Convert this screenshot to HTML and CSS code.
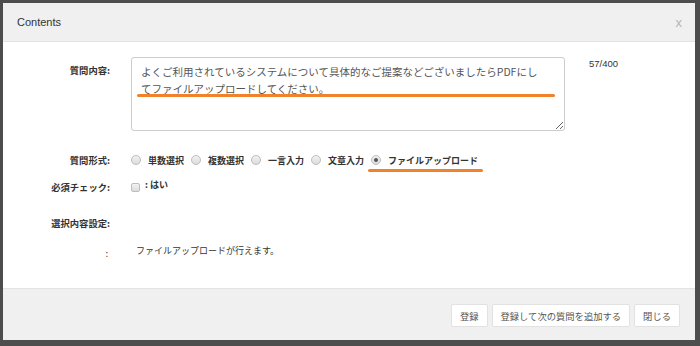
FILE: index.html
```html
<!DOCTYPE html>
<html lang="ja">
<head>
    <meta charset="UTF-8">
    <title>Contents</title>
    <link rel="stylesheet" href="styles.css">
</head>
<body>
    <div class="modal">
        <div class="modal-header">
            <h4 class="modal-title">Contents</h4>
            <button class="close">x</button>
        </div>
        <div class="modal-body">
            <div class="form-row row-question">
                <label class="form-label">質問内容:</label>
                <div class="field">
                    <textarea class="question-text">よくご利用されているシステムについて具体的なご提案などございましたらPDFにし
てファイルアップロードしてください。</textarea>
                    <span class="mark mark-text"></span>
                </div>
                <span class="counter">57/400</span>
            </div>
            <div class="form-row row-type">
                <label class="form-label">質問形式:</label>
                <div class="options">
                    <label class="option"><input type="radio" name="qtype">単数選択</label>
                    <label class="option"><input type="radio" name="qtype">複数選択</label>
                    <label class="option"><input type="radio" name="qtype">一言入力</label>
                    <label class="option"><input type="radio" name="qtype">文章入力</label>
                    <label class="option"><input type="radio" name="qtype" checked>ファイルアップロード<span class="mark mark-option"></span></label>
                </div>
            </div>
            <div class="form-row row-required">
                <label class="form-label">必須チェック:</label>
                <label class="check"><input type="checkbox"><span>: はい</span></label>
            </div>
            <div class="form-row row-setting">
                <label class="form-label">選択内容設定:</label>
            </div>
            <div class="form-row row-note">
                <label class="form-label">:</label>
                <p class="note">ファイルアップロードが行えます。</p>
            </div>
        </div>
        <div class="modal-footer">
            <button class="btn">登録</button>
            <button class="btn">登録して次の質問を追加する</button>
            <button class="btn">閉じる</button>
        </div>
    </div>
</body>
</html>
```

FILE: styles.css
```css
body {
    margin: 0;
    padding: 3px 5px 6px 3px;
    background-color: #4d4d4d;
    font-family: "Noto Sans CJK JP", "Liberation Sans", sans-serif;
    color: #333;
}
.modal {
    width: 692px;
    height: 337px;
    background-color: #fff;
    display: flex;
    flex-direction: column;
    box-sizing: border-box;
}
.modal-header {
    height: 39px;
    background-color: #f0f0f0;
    border-bottom: 1px solid #e3e3e3;
    display: flex;
    align-items: center;
    justify-content: space-between;
    padding: 0 13px 0 14px;
    box-sizing: border-box;
}
.modal-title {
    margin: 0;
    font-family: "Liberation Sans", sans-serif;
    font-size: 11px;
    font-weight: normal;
    color: #333;
}
.close {
    border: none;
    background: none;
    padding: 0;
    font-family: "Liberation Sans", sans-serif;
    font-size: 13px;
    color: #b5b5b5;
    cursor: pointer;
}
.modal-body {
    flex: 1;
    padding-top: 15px;
}
.form-row {
    display: flex;
    align-items: center;
    height: 16px;
}
.form-label {
    width: 107px;
    margin-right: 21px;
    text-align: right;
    font-size: 9.3px;
    font-weight: bold;
    color: #333;
    flex-shrink: 0;
}
.row-question {
    height: 74px;
    align-items: flex-start;
}
.row-question .form-label {
    margin-top: 6px;
}
.field {
    position: relative;
}
.question-text {
    display: block;
    width: 434px;
    height: 74px;
    margin: 0;
    padding: 5px 6px 0 9px;
    box-sizing: border-box;
    border: 1px solid #ccc;
    border-radius: 3px;
    font-family: "Noto Sans CJK JP", sans-serif;
    font-size: 10.5px;
    line-height: 17px;
    color: #555;
    overflow: hidden;
}
.mark {
    position: absolute;
    height: 3px;
    border-radius: 2px;
    background-color: #f0822c;
}
.mark-text {
    left: 6px;
    top: 37px;
    width: 418px;
}
.counter {
    margin: 0 0 0 24px;
    padding-top: 1px;
    font-family: "Liberation Sans", sans-serif;
    font-size: 9.5px;
    color: #333;
}
.row-type {
    margin-top: 21px;
}
.options {
    display: flex;
    align-items: center;
    gap: 7px;
}
.option {
    position: relative;
    display: flex;
    align-items: center;
    font-size: 9px;
    font-weight: bold;
    color: #333;
}
.option input,
.check input {
    appearance: none;
    margin: 0 7px 0 0;
    background: linear-gradient(#f2f2f2, #dcdcdc);
    border: 1px solid #bdbdbd;
    box-sizing: border-box;
}
.option input {
    width: 10px;
    height: 10px;
    border-radius: 50%;
    display: grid;
    place-items: center;
}
.option input:checked::after {
    content: "";
    width: 4px;
    height: 4px;
    border-radius: 50%;
    background-color: #555;
}
.mark-option {
    left: -3px;
    right: -5px;
    top: 15px;
}
.row-required {
    margin-top: 11px;
}
.check {
    display: flex;
    align-items: center;
    font-size: 9px;
    font-weight: bold;
}
.check input {
    width: 9px;
    height: 9px;
    border-radius: 2px;
    margin-right: 5px;
}
.check span {
    margin-top: -5px;
}
.row-setting {
    margin-top: 20px;
}
.row-note {
    margin-top: 12px;
}
.row-note .form-label {
    width: 105px;
    font-weight: normal;
    padding-top: 3px;
    margin-right: 28px;
}
.note {
    margin: 0 0 2px;
    font-size: 9px;
}
.modal-footer {
    height: 52px;
    background-color: #f0f0f0;
    border-top: 1px solid #e3e3e3;
    box-sizing: border-box;
    display: flex;
    justify-content: flex-end;
    align-items: flex-start;
    gap: 4px;
    padding: 15px 15px 0 0;
}
.btn {
    height: 23px;
    padding: 0 8px;
    background-color: #fff;
    border: 1px solid #e2e2e2;
    border-radius: 2px;
    font-family: "Noto Sans CJK JP", sans-serif;
    font-size: 9.3px;
    color: #555;
    cursor: pointer;
}
```
